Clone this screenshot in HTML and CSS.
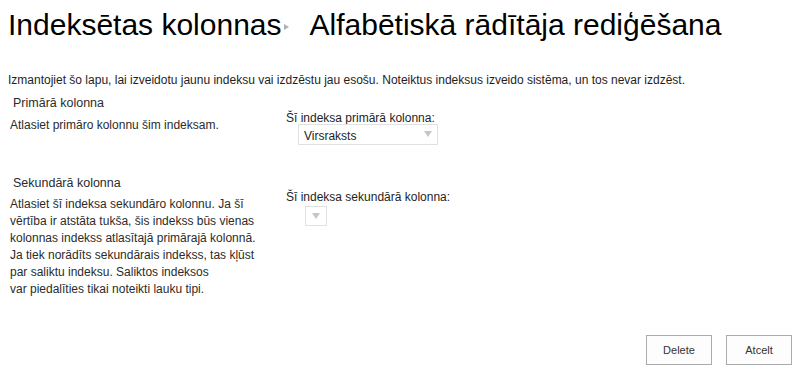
FILE: index.html
```html
<!DOCTYPE html>
<html lang="lv">
  <head>
    <meta charset="utf-8">
    <title>Alfabētiskā rādītāja rediģēšana</title>
    <link rel="stylesheet" href="styles.css">
  </head>
  <body>
    <div class="page">
      <h1 class="title">
        <span>Indeksētas kolonnas</span>
        <span class="crumb-arrow"></span>
        <span>Alfabētiskā rādītāja rediģēšana</span>
      </h1>
      <p class="intro">Izmantojiet šo lapu, lai izveidotu jaunu indeksu vai izdzēstu jau esošu. Noteiktus indeksus izveido sistēma, un tos nevar izdzēst.</p>

      <div class="section primary">
        <div class="section-info">
          <h3 class="section-head">Primārā kolonna</h3>
          <p class="section-desc">Atlasiet primāro kolonnu šim indeksam.</p>
        </div>
        <div class="section-field">
          <label class="field-label">Šī indeksa primārā kolonna:</label>
          <div class="select wide">
            <span>Virsraksts</span>
            <span class="arrow"></span>
          </div>
        </div>
      </div>

      <div class="section secondary">
        <div class="section-info">
          <h3 class="section-head">Sekundārā kolonna</h3>
          <p class="section-desc">Atlasiet šī indeksa sekundāro kolonnu. Ja šī<br>vērtība ir atstāta tukša, šis indekss būs vienas<br>kolonnas indekss atlasītajā primārajā kolonnā.<br>Ja tiek norādīts sekundārais indekss, tas kļūst<br>par saliktu indeksu. Saliktos indeksos<br>var piedalīties tikai noteikti lauku tipi.</p>
        </div>
        <div class="section-field">
          <label class="field-label">Šī indeksa sekundārā kolonna:</label>
          <div class="select small">
            <span class="arrow"></span>
          </div>
        </div>
      </div>

      <div class="buttons">
        <button class="btn">Delete</button>
        <button class="btn">Atcelt</button>
      </div>
    </div>
  </body>
</html>
```

FILE: styles.css
```css
* {
  padding: 0;
  margin: 0;
  box-sizing: border-box;
}
body {
  background-color: #ffffff;
  color: #222222;
  font-family: "Liberation Sans", Arial, sans-serif;
  font-size: 12px;
}
.page {
  width: 800px;
  height: 378px;
  position: relative;
}
.title {
  font-weight: normal;
  font-size: 30px;
  color: #000000;
  padding: 7px 0 0 8px;
  height: 60px;
  display: flex;
  align-items: flex-start;
  line-height: 36px;
}
.title span {
  white-space: nowrap;
}
.crumb-arrow {
  width: 0;
  height: 0;
  border-top: 3px solid transparent;
  border-bottom: 3px solid transparent;
  border-left: 5px solid #b0b0b0;
  margin: 17px 21px 0 2px;
}
.intro {
  padding: 12px 0 0 8px;
  line-height: 16px;
  color: #1e1e1e;
}
.section {
  display: grid;
  grid-template-columns: 286px 1fr;
}
.section-head {
  font-weight: normal;
  font-size: 12.5px;
  color: #2b2b2b;
  padding-left: 13px;
  line-height: 16px;
}
.section-desc {
  padding-left: 10px;
  line-height: 17px;
  color: #2b2b2b;
}
.primary {
  padding-top: 7px;
  height: 84px;
}
.primary .section-desc {
  padding-top: 6px;
}
.primary .section-field {
  padding-top: 15px;
}
.secondary {
  padding-top: 3px;
}
.secondary .section-desc {
  padding-top: 5px;
}
.secondary .section-field {
  padding-top: 14px;
}
.field-label {
  display: block;
  line-height: 16px;
  color: #1e1e1e;
}
.select {
  position: relative;
  border: 1px solid #e1e1e1;
  background-color: #ffffff;
  color: #1e1e1e;
}
.select.wide {
  width: 140px;
  height: 21px;
  margin: -2px 0 0 12px;
  padding: 4px 0 0 5px;
}
.select.small {
  width: 22px;
  height: 20px;
  margin: 1px 0 0 19px;
}
.arrow {
  position: absolute;
  top: 6px;
  right: 5px;
  width: 0;
  height: 0;
  border-left: 4px solid transparent;
  border-right: 4px solid transparent;
  border-top: 6px solid #c6c6c6;
}
.select.small .arrow {
  right: 6px;
  top: 6px;
}
.buttons {
  position: absolute;
  right: 8px;
  bottom: 13px;
  display: flex;
  gap: 14px;
}
.btn {
  width: 66px;
  height: 30px;
  border: 1px solid #ababab;
  background-color: #fdfdfd;
  font-family: "Liberation Sans", Arial, sans-serif;
  font-size: 11px;
  color: #333333;
}
```
